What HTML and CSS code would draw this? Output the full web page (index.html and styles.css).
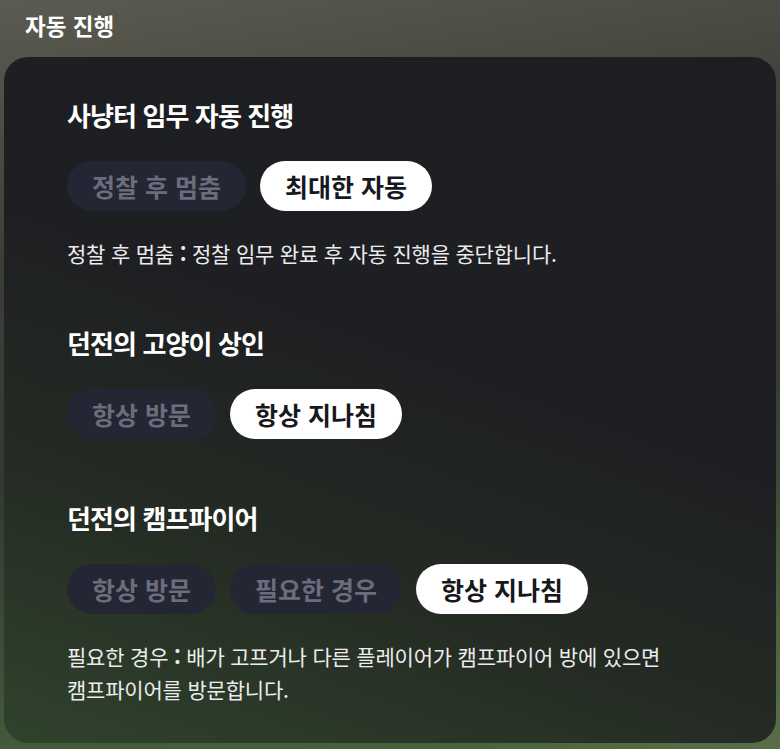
FILE: index.html
```html
<!DOCTYPE html>
<html lang="ko">
<head>
<meta charset="utf-8">
<title>자동 진행</title>
<link rel="stylesheet" href="styles.css">
</head>
<body>
<div class="page">
  <h1 class="page-title">자동 진행</h1>
  <div class="card">
    <section class="group">
      <h2 class="group-title">사냥터 임무 자동 진행</h2>
      <div class="options">
        <button class="pill">정찰 후 멈춤</button>
        <button class="pill active">최대한 자동</button>
      </div>
      <p class="desc">정찰 후 멈춤 <b class="sep">:</b> 정찰 임무 완료 후 자동 진행을 중단합니다.</p>
    </section>
    <section class="group group-plain">
      <h2 class="group-title">던전의 고양이 상인</h2>
      <div class="options">
        <button class="pill">항상 방문</button>
        <button class="pill active">항상 지나침</button>
      </div>
    </section>
    <section class="group">
      <h2 class="group-title">던전의 캠프파이어</h2>
      <div class="options">
        <button class="pill">항상 방문</button>
        <button class="pill">필요한 경우</button>
        <button class="pill active">항상 지나침</button>
      </div>
      <p class="desc">필요한 경우 <b class="sep">:</b> 배가 고프거나 다른 플레이어가 캠프파이어 방에 있으면<br>캠프파이어를 방문합니다.</p>
    </section>
  </div>
</div>
</body>
</html>
```

FILE: styles.css
```css
html, body {
  margin: 0;
  padding: 0;
  height: 100%;
}
body {
  font-family: "Noto Sans CJK KR", "Noto Sans", sans-serif;
  color: #ffffff;
  background:
    radial-gradient(ellipse 60% 50% at 100% 100%, rgba(100,110,80,0.6), rgba(100,110,80,0) 70%),
    linear-gradient(170deg, #5b5b51 0%, #3c3d37 30%, #363932 55%, #40553a 80%, #4c6b3c 100%);
}
.page {
  height: 749px;
  display: flex;
  flex-direction: column;
  box-sizing: border-box;
  padding: 0 4px 6px 4px;
}
.page-title {
  margin: 0;
  padding: 10px 0 0 21px;
  height: 57px;
  box-sizing: border-box;
  font-size: 22.5px;
  line-height: 30px;
  font-weight: 700;
}
.card {
  flex: 1;
  border-radius: 24px;
  padding: 42px 40px 0 63px;
  background:
    linear-gradient(200deg, #1d1e22 0%, #1e1f22 45%, #242b23 70%, #2c3b29 90%, #2f432c 100%);
  display: flex;
  flex-direction: column;
  gap: 57px;
}
.group {
  display: flex;
  flex-direction: column;
}
.group-plain {
  padding-bottom: 6px;
}
.group-title {
  margin: 0;
  font-size: 26px;
  line-height: 32px;
  font-weight: 700;
  letter-spacing: -0.9px;
}
.options {
  margin-top: 30px;
  display: flex;
  gap: 14px;
}
.pill {
  height: 50px;
  padding: 0 25px;
  border: none;
  border-radius: 25px;
  font-family: inherit;
  font-size: 25px;
  font-weight: 700;
  background: #242733;
  color: #6b6d7c;
}
.pill.active {
  background: #ffffff;
  color: #17181c;
}
.desc {
  margin: 26px 0 0 0;
  font-size: 21px;
  line-height: 33px;
  color: #ececec;
  letter-spacing: -0.2px;
}
.sep {
  font-weight: 700;
}
```
